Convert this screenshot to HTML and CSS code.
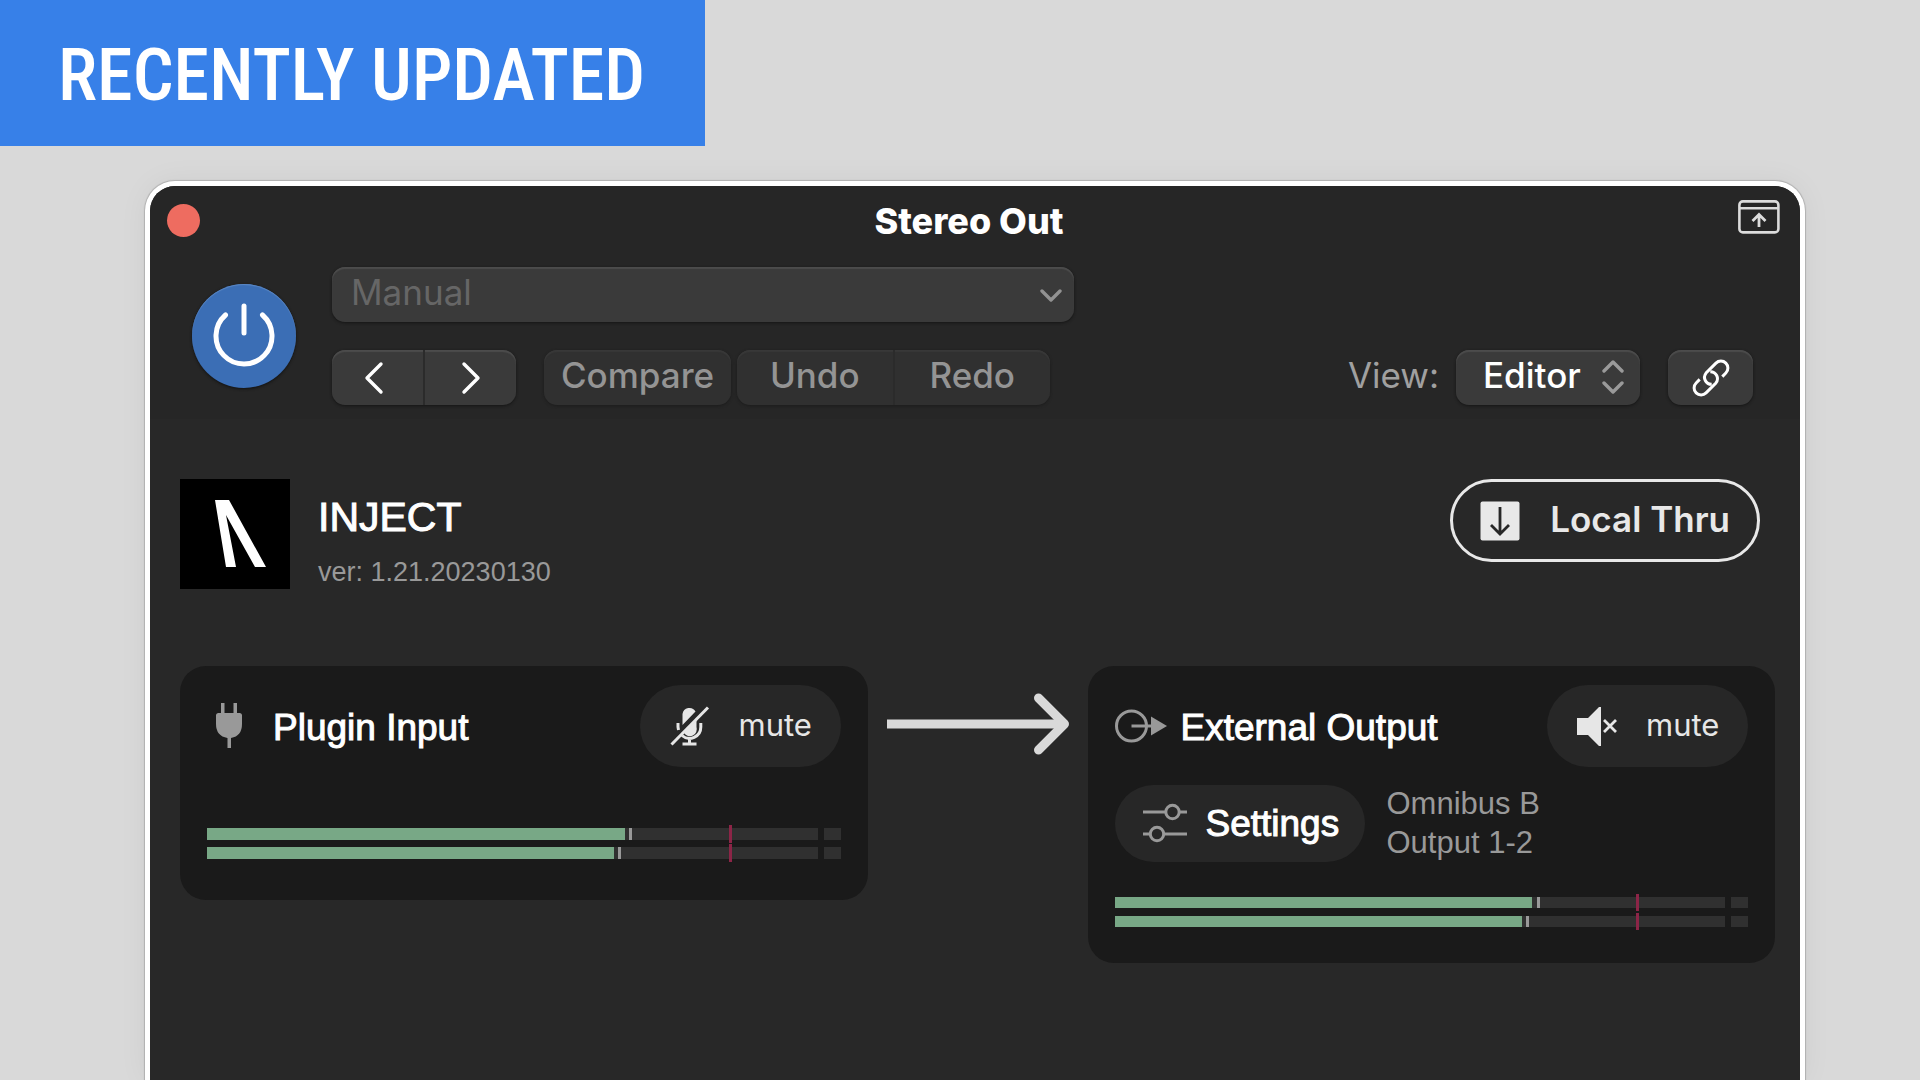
FILE: index.html
```
<!DOCTYPE html>
<html lang="en">
<head>
    <meta charset="UTF-8">
    <meta name="viewport" content="width=device-width, initial-scale=1.0">
    <title>Inject - Stereo Out</title>
    <link rel="stylesheet" href="styles.css">
</head>
<body>
    <div class="banner">Recently Updated</div>

    <main class="window">
        <!-- Title bar -->
        <header class="titlebar">
            <button class="close" aria-label="Close"></button>
            <h1>Stereo Out</h1>
            <button class="expand" aria-label="Expand">
                <svg width="42" height="34" viewBox="0 0 42 34" fill="none" stroke="#dcdcdc" stroke-width="2.6">
                    <rect x="1.4" y="1.4" width="39" height="31" rx="3.5"/>
                    <path d="M2 8.3H40"/>
                    <path d="M21 27V14.5M14.5 21L21 14.5L27.5 21" stroke-width="2.8"/>
                </svg>
            </button>
        </header>

        <!-- Host toolbar -->
        <section class="toolbar">
            <button class="power" aria-label="Power">
                <svg width="62" height="68" viewBox="0 0 62 68" fill="none" stroke="#fff" stroke-width="5" stroke-linecap="round">
                    <path d="M31 4V31"/>
                    <path d="M12.5 13A28 28 0 1 0 49.5 13"/>
                </svg>
            </button>
            <div class="toolbar-rows">
                <div class="select preset">
                    <select aria-label="Preset" disabled>
                        <option>Manual</option>
                    </select>
                    <svg width="22" height="14" viewBox="0 0 22 14" fill="none" stroke="#929292" stroke-width="3.4" stroke-linecap="round" stroke-linejoin="round">
                        <path d="M2 2L11 11L20 2"/>
                    </svg>
                </div>
                <div class="toolbar-row">
                    <div class="group nav">
                        <button aria-label="Previous">
                            <svg width="28" height="34" viewBox="0 0 28 34" fill="none" stroke="#fff" stroke-width="3.4" stroke-linecap="round" stroke-linejoin="round">
                                <path d="M17 3L3 17L17 31"/>
                            </svg>
                        </button>
                        <button aria-label="Next">
                            <svg width="20" height="34" viewBox="0 0 20 34" fill="none" stroke="#fff" stroke-width="3.4" stroke-linecap="round" stroke-linejoin="round">
                                <path d="M3 3L17 17L3 31"/>
                            </svg>
                        </button>
                    </div>
                    <div class="group dim compare">
                        <button>Compare</button>
                    </div>
                    <div class="group dim history">
                        <button>Undo</button>
                        <button>Redo</button>
                    </div>
                    <label class="view-label" for="view">View:</label>
                    <div class="select view">
                        <select id="view">
                            <option>Editor</option>
                        </select>
                        <svg width="22" height="34" viewBox="0 0 22 34" fill="none" stroke="#9a9a9a" stroke-width="3.4" stroke-linecap="round" stroke-linejoin="round">
                            <path d="M2 11L11 2L20 11M2 23L11 32L20 23"/>
                        </svg>
                    </div>
                    <div class="group link">
                        <button aria-label="Link">
                            <svg width="38" height="38" viewBox="-19 -19 38 38" fill="none" stroke="#fff" stroke-width="3">
                                <g transform="rotate(-45)">
                                    <path d="M-9 -7H-14A7 7 0 0 0 -14 7H0A7 7 0 0 0 4 -5"/>
                                    <path d="M9 7H14A7 7 0 0 0 14 -7H0A7 7 0 0 0 -4 5"/>
                                </g>
                            </svg>
                        </button>
                    </div>
                </div>
            </div>
        </section>

        <!-- Plugin editor -->
        <section class="plugin">
            <div class="plugin-header">
                <svg class="logo" width="110" height="110" viewBox="0 0 110 110">
                    <rect width="110" height="110"/>
                    <path d="M35 21H49L86 88H75L46 36L56 88H46Z" fill="#fff"/>
                </svg>
                <div class="plugin-name">
                    <h2>INJECT</h2>
                    <p>ver: 1.21.20230130</p>
                </div>
                <button class="thru">
                    <svg width="40" height="40" viewBox="0 0 40 40">
                        <rect x="0.5" y="0.5" width="39" height="39" rx="2" fill="#e8e8e8"/>
                        <path d="M20 6V33M11 24L20 33L29 24" fill="none" stroke="#272727" stroke-width="2.8"/>
                    </svg>
                    <span>Local Thru</span>
                </button>
            </div>

            <div class="routing">
                <div class="panel input">
                    <div class="panel-head">
                        <svg class="panel-icon" width="52" height="46" viewBox="0 0 52 46" fill="#999">
                            <path d="M14 0H17.5V10H26.5V0H30V10H32.5Q35 10 35 12.5V21Q35 33 24 35V45H20.5V35Q9 33 9 21V12.5Q9 10 11.5 10H14Z"/>
                        </svg>
                        <h3>Plugin Input</h3>
                        <button class="pill mute">
                            <svg width="40" height="40" viewBox="0 0 40 40" fill="#e6e6e6">
                                <path d="M12.5 19V8A7 7 0 0 1 25.5 5.5Z"/>
                                <path d="M14 27L26.5 14.5V21A7 7 0 0 1 14 27Z"/>
                                <path d="M8 17V21L8.5 24M30.8 17V21A11.3 11.3 0 0 1 12 29.5M19.5 32V38M12.5 38H26.5" fill="none" stroke="#e6e6e6" stroke-width="3"/>
                                <path d="M1.5 38.5L38 1.5" stroke="#e6e6e6" stroke-width="3"/>
                            </svg>
                            <span>mute</span>
                        </button>
                    </div>
                    <div class="meters">
                        <div class="meter">
                            <div class="track"><i class="level" style="width: 68.4%"></i><i class="peak" style="left: 69.2%"></i><i class="limit"></i></div>
                            <div class="clip"></div>
                        </div>
                        <div class="meter">
                            <div class="track"><i class="level" style="width: 66.7%"></i><i class="peak" style="left: 67.4%"></i><i class="limit"></i></div>
                            <div class="clip"></div>
                        </div>
                    </div>
                </div>

                <svg class="arrow" width="184" height="64" viewBox="0 0 184 64" fill="none" stroke="#d9d9d9" stroke-width="9" stroke-linejoin="round" stroke-linecap="round">
                    <path d="M1 31H176" stroke-linecap="butt"/>
                    <path d="M152.5 5L178.5 31L152.5 57"/>
                </svg>

                <div class="panel">
                    <div class="panel-head">
                        <svg class="panel-icon" width="52" height="46" viewBox="0 0 52 46" fill="none" stroke="#999" stroke-width="3">
                            <circle cx="16.5" cy="23" r="15"/>
                            <path d="M16.5 23H40"/>
                            <path d="M36 13.5L52 23L36 32.5Z" fill="#999" stroke="none"/>
                        </svg>
                        <h3>External Output</h3>
                        <button class="pill mute">
                            <svg width="40" height="40" viewBox="0 0 40 40">
                                <path d="M0 12H11L22 1H24V40H22L11 29H0Z" fill="#e6e6e6"/>
                                <path d="M27 14L39 26M39 14L27 26" stroke="#e6e6e6" stroke-width="2.8"/>
                            </svg>
                            <span>mute</span>
                        </button>
                    </div>
                    <div class="output">
                        <button class="pill settings">
                            <svg width="44" height="40" viewBox="0 0 44 40" fill="none" stroke="#999" stroke-width="3">
                                <circle cx="29.5" cy="9" r="6.7"/>
                                <circle cx="14" cy="31" r="6.7"/>
                                <path d="M0 9H23M36 9H44M0 31H7M21 31H44"/>
                            </svg>
                            <span>Settings</span>
                        </button>
                        <p>Omnibus B<br>Output 1-2</p>
                    </div>
                    <div class="meters">
                        <div class="meter">
                            <div class="track"><i class="level" style="width: 68.4%"></i><i class="peak" style="left: 69.2%"></i><i class="limit"></i></div>
                            <div class="clip"></div>
                        </div>
                        <div class="meter">
                            <div class="track"><i class="level" style="width: 66.7%"></i><i class="peak" style="left: 67.4%"></i><i class="limit"></i></div>
                            <div class="clip"></div>
                        </div>
                    </div>
                </div>
            </div>
        </section>
    </main>
</body>
</html>
```

FILE: styles.css
```
/* General Styles */
* {
    box-sizing: border-box;
    margin: 0;
    padding: 0;
}

body {
    display: flex;
    flex-direction: column;
    align-items: flex-start;
    min-height: 100vh;
    background: #d9d9d9;
    font-family: "Liberation Sans", Arial, sans-serif;
    color: #fff;
}

button, select {
    border: none;
    background: none;
    color: inherit;
    font: inherit;
    cursor: pointer;
}

svg {
    display: block;
    flex: none;
}

/* Banner */
.banner {
    padding: 6px 60px 0 58px;
    background: #3780e8;
    font-family: "Roboto Condensed", Roboto, sans-serif;
    font-size: 72px;
    font-weight: 500;
    line-height: 140px;
    text-transform: uppercase;
    white-space: nowrap;
}

/* Window */
.window {
    flex: 1;
    align-self: stretch;
    overflow: hidden;
    margin: 35px 115px 0 145px;
    border: 5px solid #fff;
    border-bottom: none;
    border-radius: 30px 30px 0 0;
    background: #282828;
    box-shadow: 0 0 1px 1px #b0b0b0, 0 0 30px rgba(0, 0, 0, 0.05);
}

/* Title Bar */
.titlebar {
    display: flex;
    justify-content: space-between;
    align-items: center;
    height: 67px;
    padding: 2px 20px 0 17px;
    background: #262626;
    font-family: Inter, sans-serif;
}

.titlebar h1 {
    font-size: 36px;
    font-weight: 800;
}

.close {
    width: 33px;
    height: 33px;
    border-radius: 50%;
    background: #ee6c60;
}

.expand {
    padding-bottom: 8px;
}

/* Toolbar */
.toolbar {
    display: flex;
    align-items: center;
    gap: 36px;
    padding: 14px 47px 14px 42px;
    background: #262626;
    font-family: Inter, sans-serif;
    font-size: 35px;
    font-weight: 500;
}

.power {
    display: flex;
    flex: none;
    align-items: center;
    justify-content: center;
    width: 104px;
    height: 104px;
    border-radius: 50%;
    background: #3b6eb5;
    box-shadow: inset 0 1px 1px #5c88c4, 0 1px 3px #111;
}

.toolbar-rows {
    display: flex;
    flex: 1;
    flex-direction: column;
    gap: 28px;
}

.toolbar-row {
    display: flex;
    align-items: center;
}

.select, .group {
    display: flex;
    height: 55px;
    border-radius: 13px;
    background: #3a3a3a;
    box-shadow: inset 0 2px 1px #4c4c4c, 0 1px 3px #151515;
}

.select {
    position: relative;
}

.select select {
    width: 100%;
    padding: 0 19px 6px;
    appearance: none;
}

.select svg {
    position: absolute;
    pointer-events: none;
}

.preset {
    width: 742px;
    max-width: 100%;
}

.preset select {
    color: #666;
    font-weight: 400;
    opacity: 1;
}

.preset svg {
    top: 22px;
    right: 12px;
}

.group button {
    display: flex;
    flex: 1;
    align-items: center;
    justify-content: center;
}

.group button + button {
    border-left: 2px solid #2b2b2b;
}

.dim {
    background: #303030;
    box-shadow: inset 0 2px 1px #383838, 0 1px 3px #1c1c1c;
    color: #949494;
}

.dim button {
    padding-bottom: 6px;
}

.nav {
    width: 184px;
}

.compare {
    width: 187px;
    margin-left: 28px;
}

.history {
    width: 313px;
    margin-left: 6px;
}

.view-label {
    margin-left: auto;
    padding-bottom: 6px;
    color: #a0a0a0;
    font-weight: 400;
}

.view {
    width: 184px;
    margin-left: 17px;
}

.view select {
    padding-left: 27px;
}

.view svg {
    top: 10px;
    right: 16px;
}

.link {
    width: 85px;
    margin-left: 28px;
}

/* Plugin */
.plugin {
    padding: 60px 25px 40px 30px;
}

.plugin-header {
    display: flex;
    align-items: flex-start;
    height: 110px;
}

.plugin-name {
    flex: 1;
    padding: 14px 0 0 28px;
}

.plugin-name h2 {
    font-size: 41px;
    font-weight: 400;
    line-height: 48px;
    -webkit-text-stroke: 1px #fff;
}

.plugin-name p {
    margin-top: 15px;
    color: #999;
    font-size: 27px;
    line-height: 32px;
}

.thru {
    display: flex;
    align-items: center;
    gap: 30px;
    height: 83px;
    margin-right: 15px;
    padding: 0 27px;
    border: 3px solid #e8e8e8;
    border-radius: 42px;
    color: #e8e8e8;
    font-family: Inter, sans-serif;
    font-size: 35px;
    font-weight: 600;
    white-space: nowrap;
}

.thru span, .mute span {
    padding-bottom: 4px;
}

/* Routing */
.routing {
    display: flex;
    align-items: flex-start;
    margin-top: 77px;
}

.panel {
    flex: 1;
    padding: 19px 27px 36px;
    border-radius: 26px;
    background: #1a1a1a;
}

.input {
    padding-bottom: 41px;
}

.panel-head {
    display: flex;
    align-items: center;
    height: 82px;
}

.panel h3 {
    flex: 1;
    margin-left: 14px;
    padding-top: 4px;
    font-size: 37px;
    font-weight: 400;
    white-space: nowrap;
    -webkit-text-stroke: 1px #fff;
}

.pill {
    display: flex;
    align-items: center;
    border-radius: 42px;
    background: #272727;
}

.mute {
    gap: 29px;
    width: 201px;
    height: 82px;
    padding-left: 30px;
    color: #e6e6e6;
    font-family: Inter, sans-serif;
    font-size: 31px;
}

.arrow {
    margin: 27px 18px 0;
}

.output {
    display: flex;
    align-items: center;
    gap: 22px;
    margin-top: 17px;
}

.settings {
    gap: 19px;
    width: 250px;
    height: 77px;
    padding-left: 28px;
    font-size: 37px;
    -webkit-text-stroke: 1px #fff;
}

.settings span {
    padding-top: 2px;
}

.output p {
    color: #999;
    font-size: 31px;
    line-height: 39px;
}

/* Meters */
.meters {
    display: grid;
    gap: 8px;
    margin-top: 35px;
}

.input .meters {
    gap: 7px;
    margin-top: 61px;
}

.meter {
    display: flex;
    gap: 6px;
    height: 11px;
}

.input .meter {
    height: 12px;
}

.track {
    position: relative;
    flex: 1;
    background: #303030;
}

.level {
    display: block;
    height: 100%;
    background: #78a886;
}

.peak, .limit {
    position: absolute;
    top: 0;
    bottom: 0;
    width: 3px;
    background: #999;
}

.limit {
    top: -3px;
    bottom: -3px;
    left: 85.5%;
    background: #8c2547;
}

.clip {
    width: 17px;
    background: #303030;
}
```
